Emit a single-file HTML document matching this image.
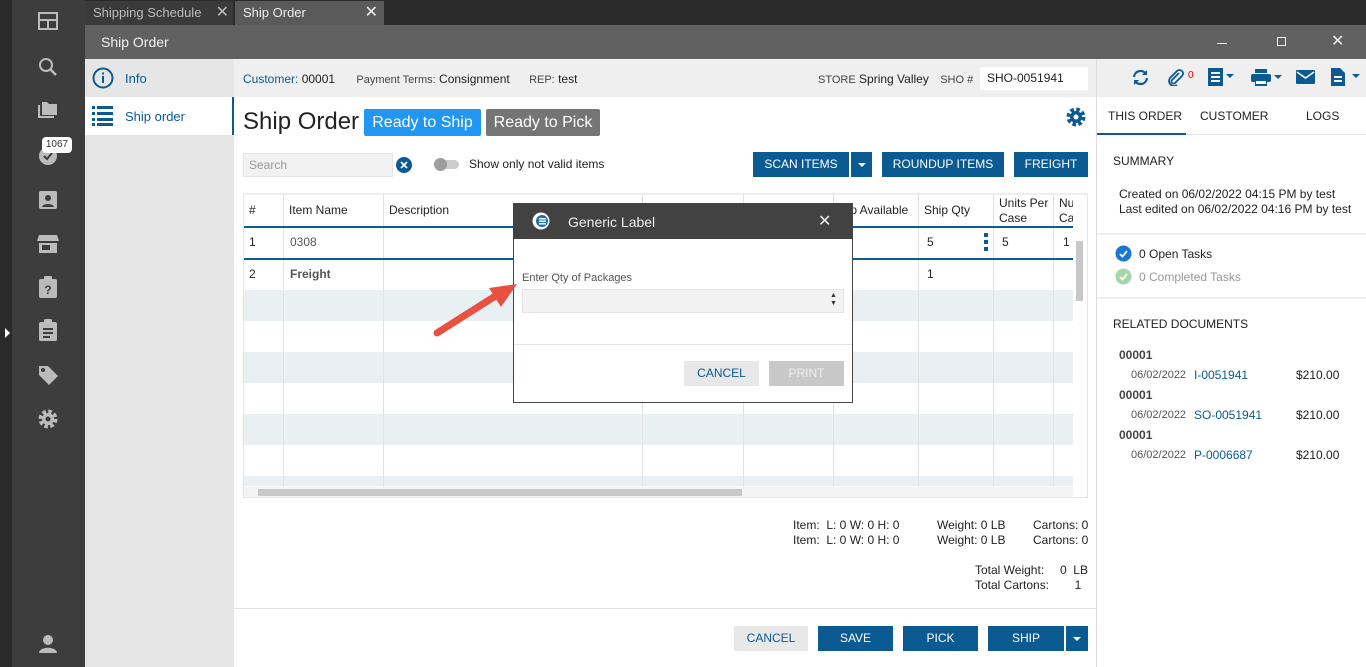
<!DOCTYPE html>
<html><head><meta charset="utf-8"><style>
*{box-sizing:border-box;margin:0;padding:0}
body{width:1366px;height:667px;overflow:hidden;position:relative;font-family:"Liberation Sans",sans-serif;font-size:12px;color:#222;background:#fff}
.a{position:absolute}
.btn{position:absolute;background:#0b5a91;color:#fff;text-align:center;font-size:12px;line-height:24px}
.cell{position:absolute;font-size:12px}
.vl{position:absolute;width:1px;background:#e2e2e2}
</style></head><body>
<div class="a" style="left:0;top:0;width:12px;height:667px;background:#2a2a2a"></div>
<div class="a" style="left:5px;top:328px;width:0;height:0;border-top:5px solid transparent;border-bottom:5px solid transparent;border-left:5px solid #fff"></div>
<div class="a" style="left:12px;top:0;width:73px;height:667px;background:#3d3d3d"></div>
<svg class="a" style="left:38px;top:12px" width="20" height="18" viewBox="0 0 20 18"><rect x="1" y="1" width="18" height="16" fill="none" stroke="#bbb" stroke-width="2"/><rect x="1" y="7" width="18" height="2" fill="#bbb"/><rect x="9" y="9" width="2" height="8" fill="#bbb"/></svg>
<svg class="a" style="left:38px;top:57px" width="20" height="20" viewBox="0 0 20 20"><circle cx="8" cy="8" r="6" fill="none" stroke="#bbb" stroke-width="2"/><path d="M12 12l6 6" stroke="#bbb" stroke-width="2.5"/></svg>
<svg class="a" style="left:38px;top:102px" width="20" height="16" viewBox="0 0 20 16"><path d="M0 3v13h16v-2H2V3z M4 0h5l2 2h8v11H4z" fill="#bbb"/></svg>
<svg class="a" style="left:38px;top:146px" width="20" height="20"><circle cx="10" cy="10" r="9" fill="#bbb"/><path d="M6 10l3 3 5-6" stroke="#3d3d3d" stroke-width="2" fill="none"/></svg>
<div class="a" style="left:42px;top:137px;width:30px;height:16px;background:#fff;border-radius:4px;font-size:10px;line-height:16px;text-align:center;color:#333">1067</div>
<svg class="a" style="left:38px;top:190px" width="20" height="20"><rect x="1" y="1" width="18" height="18" rx="2" fill="#bbb"/><circle cx="10" cy="8" r="3" fill="#3d3d3d"/><path d="M4 17c1-4 11-4 12 0z" fill="#3d3d3d"/></svg>
<svg class="a" style="left:37px;top:234px" width="22" height="20"><path d="M2 1h18l2 6H0z M2 9h18v10H2z" fill="#bbb"/><rect x="5" y="11" width="8" height="5" fill="#3d3d3d"/></svg>
<svg class="a" style="left:39px;top:276px" width="18" height="22"><rect x="0" y="3" width="18" height="19" rx="2" fill="#bbb"/><rect x="5" y="0" width="8" height="5" rx="1" fill="#bbb"/><text x="9" y="18" font-size="12" font-weight="bold" text-anchor="middle" fill="#3d3d3d" font-family="Liberation Sans">?</text></svg>
<svg class="a" style="left:39px;top:319px" width="18" height="22"><rect x="0" y="3" width="18" height="19" rx="2" fill="#bbb"/><rect x="5" y="0" width="8" height="5" rx="1" fill="#bbb"/><rect x="4" y="9" width="10" height="2" fill="#3d3d3d"/><rect x="4" y="13" width="10" height="2" fill="#3d3d3d"/><rect x="4" y="17" width="7" height="2" fill="#3d3d3d"/></svg>
<svg class="a" style="left:38px;top:365px" width="21" height="21"><path d="M1 1h9l10 10-9 9L1 10z" fill="#bbb"/><circle cx="5" cy="5" r="2" fill="#3d3d3d"/></svg>
<svg class="a" style="left:38px;top:409px" width="20" height="20" viewBox="0 0 20 20"><circle cx="10" cy="10" r="7.5" fill="none" stroke="#bbb" stroke-width="4" stroke-dasharray="3.5 2.4"/><circle cx="10" cy="10" r="6" fill="#bbb"/><circle cx="10" cy="10" r="2.5" fill="#3d3d3d"/></svg>
<svg class="a" style="left:38px;top:634px" width="20" height="20"><circle cx="10" cy="6" r="5" fill="#bbb"/><path d="M1 19c0-7 18-7 18 0z" fill="#bbb"/></svg>
<div class="a" style="left:85px;top:0;width:1281px;height:25px;background:#2b2b2b"></div>
<div class="a" style="left:85px;top:1px;width:148px;height:24px;background:#3a3a3a;color:#bbb;font-size:13px;line-height:24px;padding-left:8px">Shipping Schedule<span style="position:absolute;right:4px;top:0;font-size:16px">✕</span></div>
<div class="a" style="left:235px;top:1px;width:149px;height:24px;background:#5a5a5a;color:#eee;font-size:13px;line-height:24px;padding-left:8px">Ship Order<span style="position:absolute;right:6px;top:0;font-size:16px">✕</span></div>
<div class="a" style="left:85px;top:25px;width:1281px;height:34px;background:#616161;color:#f0f0f0;font-size:14px;line-height:34px;padding-left:16px">Ship Order</div>
<div class="a" style="left:1217px;top:43px;width:10px;height:1px;background:#eee"></div>
<div class="a" style="left:1277px;top:37px;width:9px;height:9px;border:1px solid #eee"></div>
<div class="a" style="left:1331px;top:31px;color:#eee;font-size:16px">✕</div>
<div class="a" style="left:85px;top:59px;width:149px;height:608px;background:#e6e6e6"></div>
<svg class="a" style="left:92px;top:67px" width="22" height="22"><circle cx="11" cy="11" r="9.5" fill="none" stroke="#0b5a91" stroke-width="2"/><rect x="10" y="9" width="2" height="7" fill="#0b5a91"/><rect x="10" y="5.5" width="2" height="2" fill="#0b5a91"/></svg>
<div class="a" style="left:125px;top:71px;color:#0b5a91;font-size:13px">Info</div>
<div class="a" style="left:85px;top:97px;width:149px;height:38px;background:#fff;border-right:2px solid #0b5a91"></div>
<svg class="a" style="left:92px;top:106px" width="21" height="20"><g fill="#0b5a91"><rect x="0" y="0" width="3" height="3"/><rect x="5" y="0" width="16" height="3"/><rect x="0" y="6" width="3" height="3"/><rect x="5" y="6" width="16" height="3"/><rect x="0" y="12" width="3" height="3"/><rect x="5" y="12" width="16" height="3"/><rect x="0" y="17" width="3" height="3"/><rect x="5" y="17" width="16" height="3"/></g></svg>
<div class="a" style="left:125px;top:109px;color:#0b5a91;font-size:13px">Ship order</div>
<div class="a" style="left:234px;top:59px;width:862px;height:38px;background:#efefef"></div>
<div class="a" style="left:243px;top:72px;font-size:12px"><span style="color:#0b5a91">Customer:</span> 00001 <span style="margin-left:18px;color:#444;font-size:11px">Payment Terms:</span> Consignment <span style="margin-left:16px;color:#444;font-size:11px">REP:</span> test</div>
<div class="a" style="left:818px;top:72px;font-size:12px"><span style="color:#444;font-size:11px">STORE</span> Spring Valley <span style="margin-left:8px;color:#444;font-size:11px">SHO #</span></div>
<div class="a" style="left:980px;top:67px;width:108px;height:23px;background:#fff;font-size:12px;line-height:23px;padding-left:7px">SHO-0051941</div>
<div class="a" style="left:243px;top:108px;font-size:24px;color:#222">Ship Order</div>
<div class="a" style="left:364px;top:109px;width:117px;height:27px;background:#2196f3;color:#fff;font-size:16px;line-height:27px;text-align:center;border-radius:2px">Ready to Ship</div>
<div class="a" style="left:486px;top:109px;width:114px;height:27px;background:#757575;color:#fff;font-size:16px;line-height:27px;text-align:center;border-radius:2px">Ready to Pick</div>
<svg class="a" style="left:1066px;top:107px" width="20" height="20" viewBox="0 0 20 20"><circle cx="10" cy="10" r="7.5" fill="none" stroke="#0b5a91" stroke-width="4" stroke-dasharray="3.5 2.4"/><circle cx="10" cy="10" r="6" fill="#0b5a91"/><circle cx="10" cy="10" r="2.5" fill="#fff"/></svg>
<div class="a" style="left:243px;top:153px;width:150px;height:24px;background:#f2f2f2;border:1px solid #e4e4e4;color:#999;font-size:12px;line-height:22px;padding-left:5px">Search</div>
<svg class="a" style="left:396px;top:157px" width="16" height="16"><circle cx="8" cy="8" r="8" fill="#0b5a91"/><path d="M5 5l6 6M11 5l-6 6" stroke="#fff" stroke-width="1.6"/></svg>
<div class="a" style="left:435px;top:160px;width:24px;height:9px;border-radius:5px;background:#ccc"></div>
<div class="a" style="left:434px;top:158px;width:13px;height:13px;border-radius:50%;background:#9e9e9e"></div>
<div class="a" style="left:469px;top:157px;font-size:12px">Show only not valid items</div>
<div class="btn" style="left:753px;top:152px;width:96px;height:25px">SCAN ITEMS</div>
<div class="btn" style="left:851px;top:152px;width:21px;height:25px"><span style="display:inline-block;border-left:4px solid transparent;border-right:4px solid transparent;border-top:4px solid #fff;vertical-align:middle"></span></div>
<div class="btn" style="left:882px;top:152px;width:122px;height:25px">ROUNDUP ITEMS</div>
<div class="btn" style="left:1014px;top:152px;width:74px;height:25px">FREIGHT</div>
<div class="a" style="left:243px;top:193px;width:845px;height:305px;border:1px solid #e6e6e6;border-top:2px solid #eee"></div>
<div class="a" style="left:244px;top:290px;width:829px;height:31px;background:#e9f0f4"></div>
<div class="a" style="left:244px;top:352px;width:829px;height:31px;background:#e9f0f4"></div>
<div class="a" style="left:244px;top:414px;width:829px;height:31px;background:#e9f0f4"></div>
<div class="a" style="left:244px;top:476px;width:829px;height:10px;background:#e9f0f4"></div>
<div class="vl" style="left:283px;top:195px;height:292px"></div>
<div class="vl" style="left:383px;top:195px;height:292px"></div>
<div class="vl" style="left:642px;top:195px;height:292px"></div>
<div class="vl" style="left:743px;top:195px;height:292px"></div>
<div class="vl" style="left:833px;top:195px;height:292px"></div>
<div class="vl" style="left:918px;top:195px;height:292px"></div>
<div class="vl" style="left:993px;top:195px;height:292px"></div>
<div class="vl" style="left:1053px;top:195px;height:292px"></div>
<div class="a" style="left:244px;top:226px;width:829px;height:2px;background:#0b5a91"></div>
<div class="a" style="left:244px;top:258px;width:829px;height:2px;background:#0b5a91"></div>
<div class="cell" style="left:249px;top:203px">#</div>
<div class="cell" style="left:289px;top:203px">Item Name</div>
<div class="cell" style="left:389px;top:203px">Description</div>
<div class="cell" style="left:841px;top:203px">hip Available</div>
<div class="cell" style="left:924px;top:203px">Ship Qty</div>
<div class="cell" style="left:999px;top:196px;line-height:15px">Units Per<br>Case</div>
<div class="cell" style="left:1059px;top:196px;line-height:15px;width:14px;overflow:hidden">Nu<br>Ca</div>
<div class="cell" style="left:249px;top:235px">1</div>
<div class="cell" style="left:290px;top:235px;color:#555">0308</div>
<div class="cell" style="left:927px;top:235px">5</div>
<div class="a" style="left:984px;top:233px;width:4px;height:18px;background:linear-gradient(#0b5a91 0 4px,transparent 4px 7px,#0b5a91 7px 11px,transparent 11px 14px,#0b5a91 14px)"></div>
<div class="cell" style="left:1002px;top:235px">5</div>
<div class="cell" style="left:1063px;top:235px">1</div>
<div class="cell" style="left:249px;top:267px">2</div>
<div class="cell" style="left:290px;top:267px;color:#555;font-weight:bold">Freight</div>
<div class="cell" style="left:927px;top:267px">1</div>
<div class="a" style="left:1076px;top:241px;width:7px;height:60px;background:#c8c8c8"></div>
<div class="a" style="left:244px;top:487px;width:829px;height:10px;background:#f4f4f4"></div>
<div class="a" style="left:258px;top:489px;width:484px;height:7px;background:#c8c8c8"></div>
<div class="a" style="left:793px;top:518px;line-height:15px;font-size:12px">Item:&nbsp; L: 0 W: 0 H: 0<br>Item:&nbsp; L: 0 W: 0 H: 0</div>
<div class="a" style="left:937px;top:518px;line-height:15px;font-size:12px">Weight: 0 LB<br>Weight: 0 LB</div>
<div class="a" style="left:1033px;top:518px;line-height:15px;font-size:12px">Cartons: 0<br>Cartons: 0</div>
<div class="a" style="left:975px;top:563px;line-height:15px;font-size:12px">Total Weight:<br>Total Cartons:</div>
<div class="a" style="left:1050px;top:563px;line-height:15px;font-size:12px;text-align:right;width:38px;white-space:nowrap">0&nbsp; LB<br>1&nbsp;&nbsp;</div>
<div class="a" style="left:234px;top:608px;width:862px;height:1px;background:#e0e0e0"></div>
<div class="a" style="left:734px;top:626px;width:74px;height:25px;background:#e8e8e8;color:#0b5a91;text-align:center;line-height:25px">CANCEL</div>
<div class="btn" style="left:818px;top:626px;width:75px;height:25px;line-height:25px">SAVE</div>
<div class="btn" style="left:903px;top:626px;width:75px;height:25px;line-height:25px">PICK</div>
<div class="btn" style="left:988px;top:626px;width:76px;height:25px;line-height:25px">SHIP</div>
<div class="btn" style="left:1066px;top:626px;width:22px;height:25px;line-height:25px"><span style="display:inline-block;border-left:4px solid transparent;border-right:4px solid transparent;border-top:4px solid #fff;vertical-align:middle"></span></div>
<div class="a" style="left:1096px;top:59px;width:1px;height:608px;background:#ddd"></div>
<div class="a" style="left:1097px;top:59px;width:269px;height:38px;background:#efefef"></div>
<svg class="a" style="left:1131px;top:69px" width="19" height="17" viewBox="0 0 19 17"><path d="M3 8a6.5 6.5 0 0 1 12-3M16 9a6.5 6.5 0 0 1-12 3" fill="none" stroke="#0b5a91" stroke-width="2.2"/><path d="M16 1v5h-5zM3 16v-5h5z" fill="#0b5a91"/></svg>
<svg class="a" style="left:1166px;top:68px" width="18" height="18" viewBox="0 0 18 18"><path d="M13 5l-7 7a2 2 0 0 0 3 3l7-7a3.5 3.5 0 0 0-5-5L4 10a5 5 0 0 0 7 7" fill="none" stroke="#0b5a91" stroke-width="1.8"/></svg>
<div class="a" style="left:1188px;top:70px;color:#e00;font-size:10px">0</div>
<svg class="a" style="left:1208px;top:68px" width="30" height="18"><rect x="0" y="0" width="15" height="18" fill="#0b5a91"/><rect x="3" y="4" width="9" height="2" fill="#fff"/><rect x="3" y="8" width="9" height="2" fill="#fff"/><rect x="3" y="12" width="9" height="2" fill="#fff"/><path d="M18 6h8l-4 4z" fill="#0b5a91"/></svg>
<svg class="a" style="left:1251px;top:69px" width="34" height="17"><rect x="4" y="0" width="12" height="4" fill="#0b5a91"/><rect x="0" y="5" width="20" height="8" rx="2" fill="#0b5a91"/><rect x="4" y="11" width="12" height="6" fill="#0b5a91"/><rect x="5" y="12" width="10" height="3" fill="#fff"/><path d="M23 6h8l-4 4z" fill="#0b5a91"/></svg>
<svg class="a" style="left:1296px;top:70px" width="19" height="14"><rect width="19" height="14" rx="1" fill="#0b5a91"/><path d="M1 2l8.5 6L18 2" fill="none" stroke="#fff" stroke-width="1.6"/></svg>
<svg class="a" style="left:1331px;top:68px" width="30" height="18"><path d="M0 0h9l5 5v13H0z" fill="#0b5a91"/><rect x="3" y="8" width="8" height="2" fill="#fff"/><rect x="3" y="12" width="8" height="2" fill="#fff"/><path d="M21 6h8l-4 4z" fill="#0b5a91"/></svg>
<div class="a" style="left:1108px;top:109px;font-size:12px">THIS ORDER</div>
<div class="a" style="left:1200px;top:109px;font-size:12px">CUSTOMER</div>
<div class="a" style="left:1306px;top:109px;font-size:12px">LOGS</div>
<div class="a" style="left:1097px;top:133px;width:89px;height:2px;background:#0b5a91"></div>
<div class="a" style="left:1186px;top:134px;width:180px;height:1px;background:#e4e4e4"></div>
<div class="a" style="left:1113px;top:154px;font-size:12px">SUMMARY</div>
<div class="a" style="left:1119px;top:187px;font-size:12px;line-height:15px">Created on 06/02/2022 04:15 PM by test<br>Last edited on 06/02/2022 04:16 PM by test</div>
<div class="a" style="left:1097px;top:233px;width:269px;height:2px;background:#eee"></div>
<svg class="a" style="left:1115px;top:245px" width="17" height="17"><circle cx="8.5" cy="8.5" r="8" fill="#1976d2"/><path d="M5 9l2.5 2.5L12 6" fill="none" stroke="#fff" stroke-width="1.8"/></svg>
<div class="a" style="left:1139px;top:247px;font-size:12px">0 Open Tasks</div>
<svg class="a" style="left:1115px;top:268px" width="17" height="17"><circle cx="8.5" cy="8.5" r="8" fill="#a5d6a7"/><path d="M5 9l2.5 2.5L12 6" fill="none" stroke="#fff" stroke-width="1.8"/></svg>
<div class="a" style="left:1139px;top:270px;font-size:12px;color:#999">0 Completed Tasks</div>
<div class="a" style="left:1097px;top:297px;width:269px;height:2px;background:#eee"></div>
<div class="a" style="left:1113px;top:317px;font-size:12px">RELATED DOCUMENTS</div>
<div class="a" style="left:1119px;top:348px;font-size:12px;font-weight:bold;color:#444">00001</div>
<div class="a" style="left:1131px;top:369px;font-size:11px;color:#555">06/02/2022</div>
<div class="a" style="left:1194px;top:368px;font-size:12px;color:#0b5a91">I-0051941</div>
<div class="a" style="left:1296px;top:368px;font-size:12px">$210.00</div>
<div class="a" style="left:1119px;top:388px;font-size:12px;font-weight:bold;color:#444">00001</div>
<div class="a" style="left:1131px;top:409px;font-size:11px;color:#555">06/02/2022</div>
<div class="a" style="left:1194px;top:408px;font-size:12px;color:#0b5a91">SO-0051941</div>
<div class="a" style="left:1296px;top:408px;font-size:12px">$210.00</div>
<div class="a" style="left:1119px;top:428px;font-size:12px;font-weight:bold;color:#444">00001</div>
<div class="a" style="left:1131px;top:449px;font-size:11px;color:#555">06/02/2022</div>
<div class="a" style="left:1194px;top:448px;font-size:12px;color:#0b5a91">P-0006687</div>
<div class="a" style="left:1296px;top:448px;font-size:12px">$210.00</div>
<div class="a" style="left:513px;top:203px;width:340px;height:200px;background:#fff;border:1px solid #444"></div>
<div class="a" style="left:513px;top:203px;width:340px;height:36px;background:#424242"></div>
<svg class="a" style="left:532px;top:212px" width="18" height="18"><circle cx="9" cy="9" r="8.5" fill="#fff"/><circle cx="10" cy="9" r="6" fill="#1e6fb5"/><rect x="7" y="6" width="7" height="1.5" fill="#fff"/><rect x="7" y="8.5" width="7" height="1.5" fill="#fff"/><rect x="7" y="11" width="7" height="1.5" fill="#fff"/></svg>
<div class="a" style="left:568px;top:214px;color:#eee;font-size:14px">Generic Label</div>
<div class="a" style="left:818px;top:211px;color:#eee;font-size:16px">✕</div>
<div class="a" style="left:522px;top:272px;font-size:11px;color:#555">Enter Qty of Packages</div>
<div class="a" style="left:522px;top:289px;width:322px;height:24px;background:#f2f2f2;border:1px solid #e4e4e4"></div>
<div class="a" style="left:830px;top:292px;font-size:7px;line-height:8px;color:#333">▲<br>▼</div>
<div class="a" style="left:514px;top:344px;width:338px;height:1px;background:#e4e4e4"></div>
<div class="a" style="left:684px;top:361px;width:75px;height:25px;background:#e8e8e8;color:#0b5a91;text-align:center;line-height:25px">CANCEL</div>
<div class="a" style="left:769px;top:361px;width:75px;height:25px;background:#c8c8c8;color:#eee;text-align:center;line-height:25px">PRINT</div>
<svg class="a" style="left:425px;top:278px" width="100" height="65"><path d="M12 55L72 17" stroke="#e8503f" stroke-width="7" stroke-linecap="round"/><path d="M92 6L64 10 76 29z" fill="#e8503f"/></svg>
</body></html>
